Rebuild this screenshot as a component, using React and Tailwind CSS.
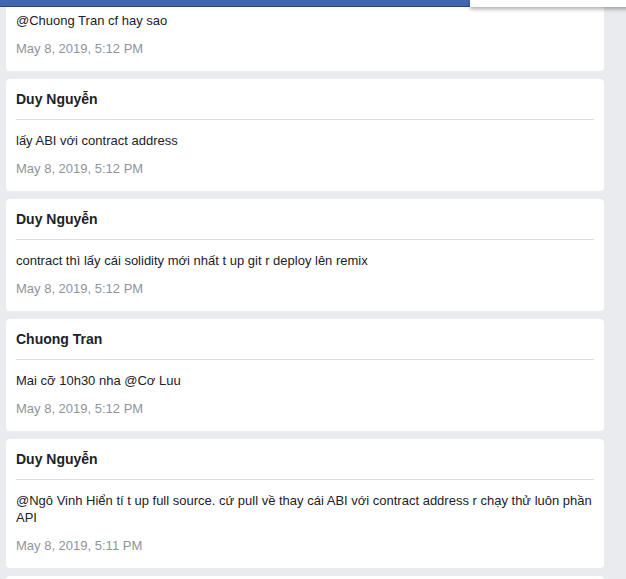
import React from 'react';

const messages = [
  { id: 1, author: 'Chuong Tran', text: '@Chuong Tran cf hay sao', time: 'May 8, 2019, 5:12 PM' },
  { id: 2, author: 'Duy Nguyễn', text: 'lấy ABI với contract address', time: 'May 8, 2019, 5:12 PM' },
  { id: 3, author: 'Duy Nguyễn', text: 'contract thì lấy cái solidity mới nhất t up git r deploy lên remix', time: 'May 8, 2019, 5:12 PM' },
  { id: 4, author: 'Chuong Tran', text: 'Mai cỡ 10h30 nha @Cơ Luu', time: 'May 8, 2019, 5:12 PM' },
  { id: 5, author: 'Duy Nguyễn', text: '@Ngô Vinh Hiển tí t up full source. cứ pull về thay cái ABI với contract address r chạy thử luôn phần API', time: 'May 8, 2019, 5:11 PM' },
  { id: 6, author: 'Cơ Luu', text: 'ok', time: 'May 8, 2019, 5:10 PM' },
];

function MessageCard({ row }) {
  return (
    <div className="rounded-[4px] bg-white px-[10px] pt-[10px] pb-[13px]">
      <div className="border-b border-[#dadde1] pb-[10px]">
        <p className="text-[14px] font-bold leading-[20px] text-[#1d2129]">{row.author}</p>
      </div>
      <p className="mt-[12px] text-[13px] leading-[17px] text-[#1d2129]">{row.text}</p>
      <p className="mt-[11px] text-[13px] leading-[18px] text-[#90949c]">{row.time}</p>
    </div>
  );
}

export default function App() {
  return (
    <div className="relative h-[579px] w-[626px] overflow-hidden bg-[#e9ebee] font-['Liberation_Sans',Arial,sans-serif]">
      <div className="mt-[-41px] flex w-[598px] flex-col gap-[8px] pl-[6px] box-content">
        {messages.map((row) => (
          <MessageCard key={row.id} row={row} />
        ))}
      </div>

      <div className="absolute left-0 top-0 h-[7px] w-[470px] border-b border-[#29487d] bg-[#4267b2]" />
      <div className="absolute left-[470px] top-0 h-[7px] w-[160px] bg-white shadow-[0_2px_4px_rgba(0,0,0,0.35)]" />
    </div>
  );
}
